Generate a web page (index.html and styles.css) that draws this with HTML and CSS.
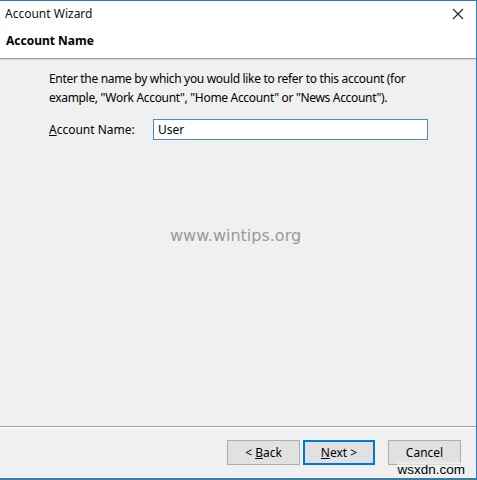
FILE: index.html
```html
<!DOCTYPE html>
<html>
<head>
<meta charset="utf-8">
<link rel="stylesheet" href="styles.css">
</head>
<body>
<div class="window">
  <div class="titlebar">
    <span class="title">Account Wizard</span>
    <svg class="close" width="12" height="12" viewBox="0 0 12 12"><path d="M1 1L11 11M11 1L1 11" stroke="#222" stroke-width="1.1" fill="none"/></svg>
  </div>
  <div class="header">Account Name</div>
  <div class="content">
    <p class="intro">Enter the name by which you would like to refer to this account (for example, "Work Account", "Home Account" or "News Account").</p>
    <div class="field">
      <label class="label"><u>A</u>ccount Name:</label>
      <div class="input">User</div>
    </div>
    <div class="watermark">www.wintips.org</div>
  </div>
  <div class="footer">
    <div class="buttons">
      <div class="btn"><span>&lt;&nbsp;<u>B</u>ack</span></div>
      <div class="btn default"><span><u>N</u>ext&nbsp;&gt;</span></div>
      <div class="btn cancel">Cancel</div>
    </div>
    <div class="credit">wsxdn.com</div>
  </div>
</div>
</body>
</html>
```
FILE: styles.css
```css
* { box-sizing: border-box; }
html, body { margin: 0; padding: 0; }
body {
  width: 477px;
  height: 480px;
  font-family: "Noto Sans", "Open Sans", sans-serif;
  font-size: 12px;
  color: #000;
  background: #f0f0f0;
}
.window {
  width: 477px;
  height: 480px;
  border-top: 1px solid #2b79c2;
  border-right: 1px solid #2b79c2;
  border-bottom: 2px solid #3a7ca5;
  display: flex;
  flex-direction: column;
  background: #f0f0f0;
}
.titlebar {
  height: 27px;
  background: #fff;
  display: flex;
  align-items: center;
  justify-content: space-between;
  padding: 0 12px 2px 5px;
}
.title { font-size: 12px; color: #111; }
.close { display: block; }
.header {
  height: 31px;
  background: #fff;
  font-weight: bold;
  padding-left: 6px;
  padding-top: 4px;
  border-bottom: 1px solid #a0a0a0;
  box-shadow: 0 1px 0 #d8d8d8;
}
.content {
  flex: 1;
  padding: 10px 0 0 49px;
  display: flex;
  flex-direction: column;
}
.intro {
  margin: 0;
  width: 380px;
  line-height: 19px;
  letter-spacing: -0.32px;
}
.field {
  display: flex;
  align-items: center;
  margin-top: 12px;
}
.label { width: 104px; }
.input {
  width: 275px;
  height: 21px;
  background: #fff;
  border: 1px solid #4d8ac4;
  padding: 1px 0 0 4px;
  line-height: 17px;
}
.watermark {
  margin-top: 86px;
  margin-left: 121px;
  font-family: "DejaVu Sans", Verdana, sans-serif;
  font-size: 16px;
  color: #999;
  letter-spacing: 0px;
}
.footer {
  height: 52px;
  border-top: 1px solid #a0a0a0;
  box-shadow: inset 0 1px 0 #fff;
  position: relative;
}
.buttons {
  display: flex;
  justify-content: flex-end;
  padding: 13px 15px 0 0;
}
.btn {
  width: 73px;
  height: 25px;
  background: #e1e1e1;
  border: 1px solid #adadad;
  display: flex;
  align-items: center;
  justify-content: center;
  margin-left: 3px;
}
.btn.default {
  border: 2px solid #0078d7;
  width: 72px;
}
.btn.cancel { margin-left: 13px; }
.credit {
  position: absolute;
  right: 11px;
  bottom: 0px;
  font-family: "Liberation Sans", Arial, sans-serif;
  font-size: 13.5px;
  background: rgba(240,240,240,0.7);
  line-height: 16px;
}
```
